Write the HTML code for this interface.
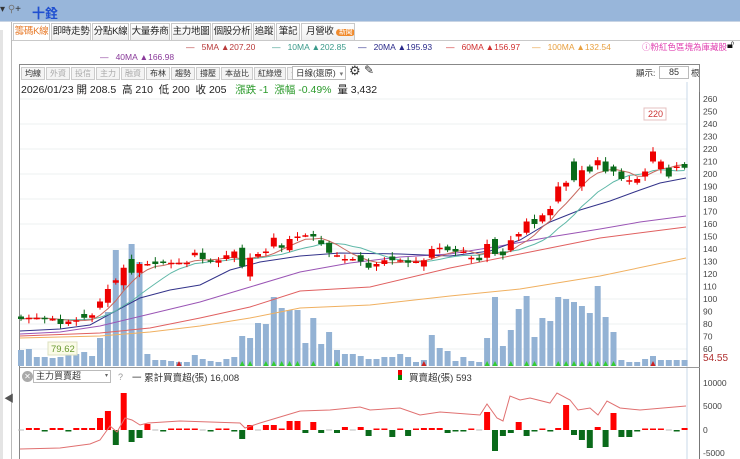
<!DOCTYPE html>
<html><head><meta charset="utf-8">
<style>
*{margin:0;padding:0;box-sizing:border-box}
body{width:740px;height:459px;overflow:hidden;background:#fff;font-family:"Liberation Sans","Noto Sans CJK TC",sans-serif;font-size:10px;color:#333;position:relative}
.abs{position:absolute;white-space:nowrap}
.top{left:0;top:0;width:740px;height:21px;background:#98b6da}
.tab{position:absolute;top:23px;height:18px;border:1px solid #c9c9c9;background:linear-gradient(#fff,#eee);font-size:9.5px;line-height:16px;text-align:center;color:#222;white-space:nowrap;overflow:hidden;letter-spacing:-0.3px}
.btn{position:absolute;top:67px;height:13px;border:1px solid #ccc;background:#f4f4f4;font-size:8px;line-height:11px;text-align:center;color:#333;white-space:nowrap;overflow:hidden}
.btn.d{color:#aaa}
</style></head><body>
<div class="abs top"></div>
<div class="abs" style="left:0;top:4px;font-size:10px;color:#333">▾ <span style="color:#777">&#9906;</span>+</div>
<div class="abs" style="left:32px;top:3px;font-size:13px;font-weight:bold;color:#1f4fd0">十銓</div>
<div class="abs" style="left:0;top:21px;width:740px;height:1px;background:#c8d4e4"></div>
<div class="abs" style="left:11px;top:22px;width:1px;height:437px;background:#bbb"></div>
<div class="abs" style="left:0;top:30px;width:3px;height:429px;background:#e4e4e4"></div>
<div class="abs" style="left:4px;top:390px;font-size:10px;color:#555">◀</div>

<div class="tab" style="left:13px;width:37px;color:#e87b2a;background:#fff;border-bottom-color:#fff">籌碼K線</div>
<div class="tab" style="left:51px;width:40px">即時走勢</div>
<div class="tab" style="left:92px;width:37px">分點K線</div>
<div class="tab" style="left:130px;width:40px">大量券商</div>
<div class="tab" style="left:171px;width:40px">主力地圖</div>
<div class="tab" style="left:212px;width:40px">個股分析</div>
<div class="tab" style="left:253px;width:22px">追蹤</div>
<div class="tab" style="left:276px;width:24px">筆記</div>
<div class="tab" style="left:301px;width:54px;text-align:left;padding-left:4px">月營收 <span style="background:#f08a2c;color:#fff;border-radius:6px;font-size:7px;padding:0 3px">新聞</span></div>
<div class="abs" style="left:12px;top:40px;width:728px;height:1px;background:#c9c9c9"></div>

<div class="abs" style="top:42px;left:186px;font-size:8.5px;color:#b83a3a">—&nbsp;&nbsp;&nbsp;5MA ▲207.20</div>
<div class="abs" style="top:42px;left:272px;font-size:8.5px;color:#3a9a8a">—&nbsp;&nbsp;&nbsp;10MA ▲202.85</div>
<div class="abs" style="top:42px;left:358px;font-size:8.5px;color:#2a2a8a">—&nbsp;&nbsp;&nbsp;20MA ▲195.93</div>
<div class="abs" style="top:42px;left:446px;font-size:8.5px;color:#d03030">—&nbsp;&nbsp;&nbsp;60MA ▲156.97</div>
<div class="abs" style="top:42px;left:532px;font-size:8.5px;color:#e8a040">—&nbsp;&nbsp;&nbsp;100MA ▲132.54</div>
<div class="abs" style="top:52px;left:100px;font-size:8.5px;color:#8a3a9a">—&nbsp;&nbsp;&nbsp;40MA ▲166.98</div>
<div class="abs" style="top:41px;left:642px;font-size:8.5px;color:#e040b0">ⓘ粉紅色區塊為庫藏股</div>
<div class="abs" style="top:39px;left:727px;font-size:11px;color:#111">🔓︎</div>

<div class="abs" style="left:19px;top:64px;width:681px;height:395px;border:1px solid #888;border-bottom:none"></div>
<div class="btn" style="left:21px;width:24px">均線</div>
<div class="btn d" style="left:46px;width:24px">外資</div>
<div class="btn d" style="left:71px;width:24px">投信</div>
<div class="btn d" style="left:96px;width:24px">主力</div>
<div class="btn d" style="left:121px;width:24px">融資</div>
<div class="btn" style="left:146px;width:24px">布林</div>
<div class="btn" style="left:171px;width:24px">趨勢</div>
<div class="btn" style="left:196px;width:24px">撐壓</div>
<div class="btn" style="left:221px;width:32px">本益比</div>
<div class="btn" style="left:254px;width:32px">紅綠燈</div>
<div class="btn d" style="left:287px;width:32px">分價圖</div>
<div class="abs" style="left:292px;top:66px;width:54px;height:14px;border:1px solid #bbb;background:#fff;font-size:8.5px;line-height:12px;padding-left:3px">日線(還原)<span style="color:#777;font-size:7px;margin-left:4px">▾</span></div>
<div class="abs" style="left:349px;top:63px;font-size:13px;color:#333">⚙</div>
<div class="abs" style="left:364px;top:63px;font-size:12px;color:#333">✎</div>
<div class="abs" style="left:636px;top:67px;font-size:8.5px;color:#333">顯示:</div>
<div class="abs" style="left:659px;top:66px;width:30px;height:13px;border:1px solid #bbb;font-size:9px;text-align:center;line-height:11px;background:#fff">85</div>
<div class="abs" style="left:691px;top:67px;font-size:8.5px">根</div>
<div class="abs" style="left:21px;top:82px;font-size:10.5px;color:#222">2026/01/23 開 208.5 &nbsp;高 210 &nbsp;低 200 &nbsp;收 205 &nbsp;&nbsp;<span style="color:#2a9a2a">漲跌 -1 &nbsp;漲幅 -0.49%</span> &nbsp;量 3,432</div>

<svg class="abs" style="left:0;top:0" width="740" height="459" id="sv"></svg>

<div class="abs" style="left:22px;top:371px;width:11px;height:11px;border-radius:50%;background:#aaa;color:#fff;font-size:8px;line-height:11px;text-align:center">✕</div>
<div class="abs" style="left:33px;top:370px;width:78px;height:13px;border:1px solid #bbb;font-size:9px;line-height:11px;padding-left:2px;background:#fff">主力買賣超<span style="float:right;font-size:6px;color:#666;margin-right:2px">▾</span></div>
<div class="abs" style="left:118px;top:372px;font-size:9px;color:#999">?</div>
<div class="abs" style="left:132px;top:370px;font-size:9.5px;color:#333">一 累計買賣超(張) 16,008</div>
<div class="abs" style="left:398px;top:370px;width:4px;height:5px;background:#e00"></div>
<div class="abs" style="left:398px;top:375px;width:4px;height:5px;background:#080"></div>
<div class="abs" style="left:409px;top:370px;font-size:9.5px;color:#333">買賣超(張) 593</div>

<script>
var sv=document.getElementById('sv'),h='';
function Y(p){return 99+(260-p)*1.25}
function X(i){return 21+i*7.9}
var oc=[[86,84],[84,85],[85,85],[85,84],[84,84],[84,80],[80,82],[82,83],[88,85],[85,87],[93,98],[97,108],[113,115],[111,125],[132,121],[121,128],[128,128],[130,128],[130,129],[128,129],[129,129],[129,129],[135,137],[137,132],[131,130],[129,131],[132,135],[133,138],[141,126],[118,133],[134,136],[138,138],[142,149],[143,141],[139,148],[150,150],[151,151],[152,150],[147,144],[145,137],[135,135],[132,132],[132,132],[135,130],
[129,125],[126,128],[128,131],[134,131],[131,131],[131,129],[130,130],[126,131],[133,140],[140,141],[142,139],[140,138],[138,138],[132,133],[133,131],[133,144],[148,136],[138,135],[139,147],[150,152],[153,162],[164,160],[162,167],[167,172],[178,190],[190,193],[210,195],[190,203],[206,202],[207,211],[210,202],[206,202],[202,196],[195,195],[193,196],[198,202],[210,218],[204,210],[205,198],[206,206],[208,205]];
var vol=[16,17,9,9,8,9,11,12,14,10,28,54,116,98,122,104,12,6,6,5,4,4,11,7,5,4,7,9,30,28,43,42,69,58,56,56,23,48,22,34,16,12,12,10,7,7,9,9,12,9,4,6,31,18,15,5,9,5,4,28,69,20,36,57,70,29,48,45,69,67,64,60,53,80,49,34,6,4,4,7,10,6,6,6,6];
for(var p=260;p>=60;p-=20){h+='<line x1="20" x2="687" y1="'+Y(p)+'" y2="'+Y(p)+'" stroke="#eef0f2"/>'}
for(var p=260;p>=60;p-=10){h+='<text x="703" y="'+(Y(p)+3)+'" font-size="8.5" fill="#444">'+p+'</text>'}
h+='<line x1="687" x2="687" y1="82" y2="459" stroke="#c8d8ea"/><line x1="699.5" x2="699.5" y1="92" y2="459" stroke="#777"/>';
for(var i=0;i<85;i++){var v=vol[i];h+='<rect x="'+(X(i)-3)+'" y="'+(366-v)+'" width="6" height="'+v+'" fill="#93b2d4"/>'}
[28,29,31,32,33,34,35,37,40,59,60,62,64,65,68,69,70,71,72,73,74,75].forEach(function(i){h+='<polygon points="'+(X(i)-2.5)+',366 '+(X(i)+2.5)+',366 '+X(i)+',361" fill="#3c3"/>'});
[20,51,80].forEach(function(i){h+='<polygon points="'+(X(i)-2.5)+',366 '+(X(i)+2.5)+',366 '+X(i)+',361" fill="#c22"/>'});
function pl(pts,c){h+='<polyline fill="none" stroke="'+c+'" stroke-width="1" points="'+pts+'"/>'}
pl('20,336 100,333 150,328 200,318 250,307 300,291 370,287 450,268 520,254 600,238 686,227','#e06060');
pl('20,338 100,336 150,332 200,326 250,318 300,308 370,305 450,296 520,289 600,276 686,258','#f0b060');
pl('20,334 60,332 100,326 150,314 200,302 250,287 300,272 350,263 400,257 450,254 500,246 550,237 600,229 640,222 686,216','#9a55b5');
pl('20,331 60,329 90,325 110,314 140,298 170,290 200,285 230,270 260,262 300,256 340,253 400,254 450,256 490,251 520,240 550,222 580,210 610,201 640,190 660,183 686,178','#33338a');
var cl=oc.map(function(a){return a[1]});
function ma(n,col){var s='';for(var i=0;i<85;i++){var a=0,k=0;for(var j=Math.max(0,i-n+1);j<=i;j++){a+=cl[j];k++}s+=X(i)+','+Y(a/k)+' '}pl(s,col)}
ma(10,'#5fb8a8');ma(5,'#c86a60');
for(var i=0;i<85;i++){var o=oc[i][0],c=oc[i][1],up=c>=o,col=up?'#e00':'#0a6a1a';var hi=Math.max(o,c)+1.5+(i%3),lo=Math.min(o,c)-1.5-(i%2)*2;
h+='<line x1="'+X(i)+'" x2="'+X(i)+'" y1="'+Y(hi)+'" y2="'+Y(lo)+'" stroke="'+col+'"/>';
var t=Y(Math.max(o,c)),b=Y(Math.min(o,c));if(b-t<1.5){b=t+1.5}
h+='<rect x="'+(X(i)-3)+'" y="'+t+'" width="6" height="'+(b-t)+'" fill="'+col+'"/>'}
h+='<rect x="644" y="108" width="22" height="12" fill="#fff" stroke="#e6c0c0"/><text x="648" y="117" font-size="9" fill="#c33">220</text>';
h+='<rect x="48" y="342" width="29" height="13" fill="#fbfbe8" stroke="#dde0c0"/><text x="51" y="352" font-size="9.5" fill="#6a9a30">79.62</text>';
h+='<text x="703" y="361" font-size="10" fill="#b03030">54.55</text>';
h+='<line x1="20" x2="700" y1="367.5" y2="367.5" stroke="#999"/>';
[[10000,383],[5000,406],[0,430],[-5000,453]].forEach(function(a){h+='<text x="703" y="'+(a[1]+3)+'" font-size="8.5" fill="#444">'+a[0]+'</text>'});
var ind={1:2,2:2,3:-1,4:2,5:2,6:-1,7:2,8:2,9:2,10:12,11:19,12:-15,13:37,14:-12,15:-8,16:6,18:-1,19:1,20:1,21:1,22:1,24:-1,25:1,26:1,27:-1,28:-9,29:5,31:5,32:5,33:1,34:9,35:9,36:-3,37:8,38:-3,40:-3,41:3,43:3,44:-6,45:1,46:1,47:-7,48:1,49:-6,50:1,51:2,52:2,53:2,54:-3,55:-1,56:-1,57:1,59:18,60:-21,61:-6,62:-3,63:8,64:-6,65:-1,66:1,67:-1,68:2,69:25,70:-5,71:-10,72:-18,73:3,74:-17,75:17,76:-7,77:-7,78:-1,79:1,80:1,81:1,83:-1,84:2};
for(var i=0;i<85;i++){var v=ind[i]||0;if(v==0){h+='<line x1="'+(X(i)-3)+'" x2="'+(X(i)+3)+'" y1="430" y2="430" stroke="#bbb"/>';continue}
var col=v>0?'#f00':'#0a6a1a';var hh=Math.max(Math.abs(v),1.5);h+='<rect x="'+(X(i)-3)+'" y="'+(v>0?430-hh:430)+'" width="6" height="'+hh+'" fill="'+col+'"/>'}
pl('20,449 60,448 90,444 100,440 110,426 117,432 125,418 132,420 140,425 148,423 180,421 240,423 245,428 260,423 300,411 330,410 360,407 370,410 400,408 420,415 440,412 480,415 487,404 497,418 503,421 510,396 520,400 530,398 550,403 557,393 570,400 578,410 590,408 598,415 607,401 620,408 640,410 686,406','#e07070');
sv.innerHTML=h;
</script>
</body></html>
